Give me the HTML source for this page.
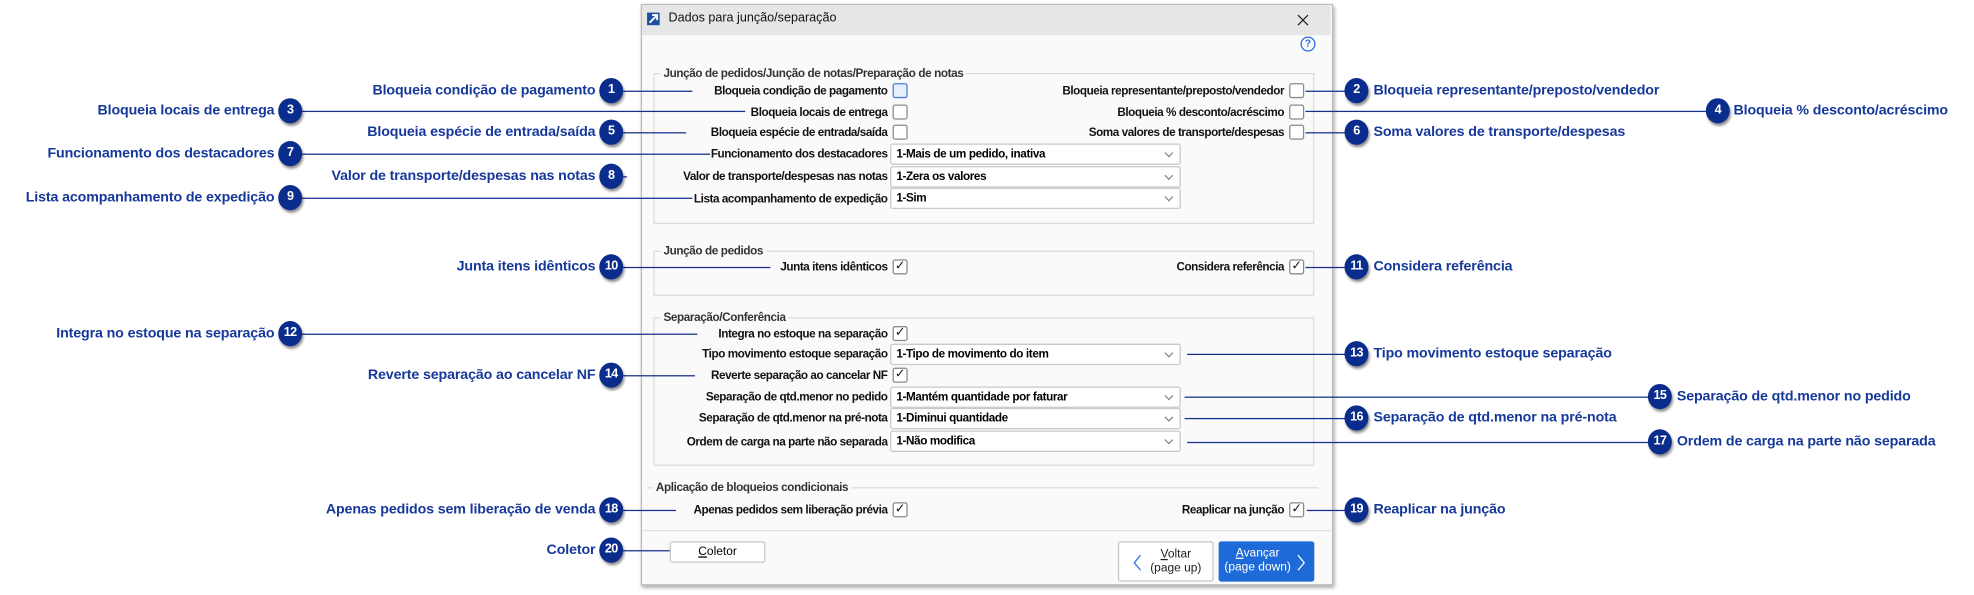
<!DOCTYPE html>
<html><head><meta charset="utf-8"><style>
html,body{margin:0;padding:0;background:#fff;width:1974px;height:595px;overflow:hidden}
#w{position:absolute;left:0;top:0;width:1568px;height:473px;transform:scale(1.2589);transform-origin:0 0;font-family:"Liberation Sans",sans-serif}
.a{position:absolute}
.b{position:absolute;width:19px;height:20px;border-radius:50%;background:#0a2c8c;color:#fff;font:bold 10px "Liberation Sans",sans-serif;line-height:20px;text-align:center;box-shadow:1px 2px 2px rgba(0,0,0,.45);letter-spacing:-.5px;z-index:3}
.cl{position:absolute;color:#16389a;font:bold 11.3px "Liberation Sans",sans-serif;white-space:nowrap;line-height:14px;letter-spacing:-.1px}
.ln{position:absolute;height:1px;background:#14308a;z-index:1}
.lb{position:absolute;font:bold 9.3px "Liberation Sans",sans-serif;color:#111;white-space:nowrap;line-height:12px;letter-spacing:-.35px;text-align:right;background:#fafafa;z-index:2;padding-left:1px}
.cb{position:absolute;width:10px;height:10px;border:1px solid #8a8a8a;border-radius:2px;background:#fff;font:bold 10px "DejaVu Sans",sans-serif;line-height:10px;text-align:center;color:#111}
.co{position:absolute;left:707px;border:1px solid #c9c9c9;border-radius:2px;background:#fff;font:bold 9.3px "Liberation Sans",sans-serif;line-height:15px;padding-left:4px;box-sizing:border-box;width:231px;height:17px;letter-spacing:-.3px}
.co:after{content:"";position:absolute;right:6px;top:4px;width:4px;height:4px;border-right:1px solid #888;border-bottom:1px solid #888;transform:rotate(45deg)}
.gb{position:absolute;border:1px solid #dcdcdc}
.lg{position:absolute;background:#fafafa;padding:0 2px;font:bold 9.3px "Liberation Sans",sans-serif;color:#333;line-height:12px;letter-spacing:-.3px}
</style></head><body><div id="w">
<div class="a" style="left:509px;top:3px;width:548px;height:460px;background:#fafafa;border:1px solid #bdbdbd;box-shadow:1px 2px 3px rgba(0,0,0,.35)"></div>
<div class="a" style="left:510px;top:4px;width:547px;height:24px;background:#e6e6e6"></div>
<div class="a" style="left:514px;top:10px;width:10px;height:10px;background:#1d4fa0"></div>
<svg class="a" style="left:514px;top:10px" width="10" height="10"><path d="M2 8 L8 2 M4 2 H8 V6" stroke="#fff" stroke-width="1.5" fill="none"/></svg>
<div class="a" style="left:531px;top:9px;font:10px 'Liberation Sans',sans-serif;color:#111">Dados para junção/separação</div>
<svg class="a" style="left:1030px;top:11px" width="10" height="10"><path d="M1 1L9 9M9 1L1 9" stroke="#222" stroke-width="1"/></svg>
<div class="a" style="left:1033px;top:29px;width:10px;height:10px;border:1px solid #2a6de0;border-radius:50%;color:#2a6de0;font:bold 8px 'Liberation Sans',sans-serif;text-align:center;line-height:10px">?</div>

<div class="gb" style="left:519px;top:58px;width:523px;height:118px"></div>
<div class="lg" style="left:525px;top:52px">Junção de pedidos/Junção de notas/Preparação de notas</div>
<div class="gb" style="left:519px;top:199px;width:523px;height:34px"></div>
<div class="lg" style="left:525px;top:193px">Junção de pedidos</div>
<div class="gb" style="left:519px;top:252px;width:523px;height:116px"></div>
<div class="lg" style="left:525px;top:246px">Separação/Conferência</div>
<div class="a" style="left:514px;top:387px;width:533px;height:1px;background:#dcdcdc"></div>
<div class="lg" style="left:519px;top:381px">Aplicação de bloqueios condicionais</div>
<div class="a" style="left:510px;top:421px;width:547px;height:1px;background:#e2e2e2"></div>

<div class="lb" style="right:863px;top:66px">Bloqueia condição de pagamento</div>
<div class="lb" style="right:863px;top:83px">Bloqueia locais de entrega</div>
<div class="lb" style="right:863px;top:99px">Bloqueia espécie de entrada/saída</div>
<div class="lb" style="right:863px;top:116px">Funcionamento dos destacadores</div>
<div class="lb" style="right:863px;top:134px">Valor de transporte/despesas nas notas</div>
<div class="lb" style="right:863px;top:152px">Lista acompanhamento de expedição</div>
<div class="lb" style="right:863px;top:206px">Junta itens idênticos</div>
<div class="lb" style="right:863px;top:259px">Integra no estoque na separação</div>
<div class="lb" style="right:863px;top:275px">Tipo movimento estoque separação</div>
<div class="lb" style="right:863px;top:292px">Reverte separação ao cancelar NF</div>
<div class="lb" style="right:863px;top:309px">Separação de qtd.menor no pedido</div>
<div class="lb" style="right:863px;top:326px">Separação de qtd.menor na pré-nota</div>
<div class="lb" style="right:863px;top:345px">Ordem de carga na parte não separada</div>
<div class="lb" style="right:863px;top:399px">Apenas pedidos sem liberação prévia</div>
<div class="lb" style="right:548px;top:66px">Bloqueia representante/preposto/vendedor</div>
<div class="lb" style="right:548px;top:83px">Bloqueia % desconto/acréscimo</div>
<div class="lb" style="right:548px;top:99px">Soma valores de transporte/despesas</div>
<div class="lb" style="right:548px;top:206px">Considera referência</div>
<div class="lb" style="right:548px;top:399px">Reaplicar na junção</div>
<div class="cb" style="left:709px;top:66px;border-color:#4d7fd6;background:#e8effc"></div>
<div class="cb" style="left:709px;top:83px"></div>
<div class="cb" style="left:709px;top:99px"></div>
<div class="cb" style="left:709px;top:206px">✓</div>
<div class="cb" style="left:709px;top:259px">✓</div>
<div class="cb" style="left:709px;top:292px">✓</div>
<div class="cb" style="left:709px;top:399px">✓</div>
<div class="cb" style="left:1024px;top:66px"></div>
<div class="cb" style="left:1024px;top:83px"></div>
<div class="cb" style="left:1024px;top:99px"></div>
<div class="cb" style="left:1024px;top:206px">✓</div>
<div class="cb" style="left:1024px;top:399px">✓</div>
<div class="co" style="top:114px">1-Mais de um pedido, inativa</div>
<div class="co" style="top:132px">1-Zera os valores</div>
<div class="co" style="top:149px">1-Sim</div>
<div class="co" style="top:273px">1-Tipo de movimento do item</div>
<div class="co" style="top:307px">1-Mantém quantidade por faturar</div>
<div class="co" style="top:324px">1-Diminui quantidade</div>
<div class="co" style="top:342px">1-Não modifica</div>
<div class="a" style="left:532px;top:430px;width:74px;height:15px;border:1px solid #c8c8c8;border-radius:2px;background:#fff;font:9.5px 'Liberation Sans',sans-serif;text-align:center;line-height:15px"><u>C</u>oletor</div>
<div class="a" style="left:888px;top:430px;width:76px;height:32px;border:1px solid #c8c8c8;border-radius:2px;background:#fff;font:9.5px 'Liberation Sans',sans-serif;line-height:11px;text-align:center;box-sizing:border-box;padding:4px 0 0 16px;color:#222"><u>V</u>oltar<br>(page up)</div>
<svg class="a" style="left:900px;top:440px" width="8" height="14"><path d="M6 1L1 7L6 13" stroke="#2a6de0" fill="none" stroke-width="1"/></svg>
<div class="a" style="left:968px;top:430px;width:76px;height:32px;background:#1d6ad8;border-radius:2px;font:9.5px 'Liberation Sans',sans-serif;line-height:11px;color:#fff;box-sizing:border-box;padding:4px 14px 0 0;text-align:center"><u>A</u>vançar<br>(page down)</div>
<svg class="a" style="left:1030px;top:440px" width="8" height="14"><path d="M1 1L6 7L1 13" stroke="#fff" fill="none" stroke-width="1"/></svg>

<div class="ln" style="left:495px;width:55px;top:72px"></div><div class="b" style="left:476px;top:62px">1</div><div class="cl" style="right:1095px;top:65px">Bloqueia condição de pagamento</div>
<div class="ln" style="left:240px;width:352px;top:88px"></div><div class="b" style="left:221px;top:78px">3</div><div class="cl" style="right:1350px;top:81px">Bloqueia locais de entrega</div>
<div class="ln" style="left:495px;width:50px;top:105px"></div><div class="b" style="left:476px;top:95px">5</div><div class="cl" style="right:1095px;top:98px">Bloqueia espécie de entrada/saída</div>
<div class="ln" style="left:240px;width:340px;top:122px"></div><div class="b" style="left:221px;top:112px">7</div><div class="cl" style="right:1350px;top:115px">Funcionamento dos destacadores</div>
<div class="ln" style="left:495px;width:3px;top:140px"></div><div class="b" style="left:476px;top:130px">8</div><div class="cl" style="right:1095px;top:133px">Valor de transporte/despesas nas notas</div>
<div class="ln" style="left:240px;width:328px;top:157px"></div><div class="b" style="left:221px;top:147px">9</div><div class="cl" style="right:1350px;top:150px">Lista acompanhamento de expedição</div>
<div class="ln" style="left:495px;width:117px;top:212px"></div><div class="b" style="left:476px;top:202px">10</div><div class="cl" style="right:1095px;top:205px">Junta itens idênticos</div>
<div class="ln" style="left:240px;width:314px;top:265px"></div><div class="b" style="left:221px;top:255px">12</div><div class="cl" style="right:1350px;top:258px">Integra no estoque na separação</div>
<div class="ln" style="left:495px;width:57px;top:298px"></div><div class="b" style="left:476px;top:288px">14</div><div class="cl" style="right:1095px;top:291px">Reverte separação ao cancelar NF</div>
<div class="ln" style="left:495px;width:42px;top:405px"></div><div class="b" style="left:476px;top:395px">18</div><div class="cl" style="right:1095px;top:398px">Apenas pedidos sem liberação de venda</div>
<div class="ln" style="left:495px;width:37px;top:437px"></div><div class="b" style="left:476px;top:427px">20</div><div class="cl" style="right:1095px;top:430px">Coletor</div>
<div class="ln" style="left:1037px;width:32px;top:72px"></div><div class="b" style="left:1068px;top:62px">2</div><div class="cl" style="left:1091px;top:65px">Bloqueia representante/preposto/vendedor</div>
<div class="ln" style="left:1037px;width:318px;top:88px"></div><div class="b" style="left:1355px;top:78px">4</div><div class="cl" style="left:1377px;top:81px">Bloqueia % desconto/acréscimo</div>
<div class="ln" style="left:1037px;width:32px;top:105px"></div><div class="b" style="left:1068px;top:95px">6</div><div class="cl" style="left:1091px;top:98px">Soma valores de transporte/despesas</div>
<div class="ln" style="left:1037px;width:32px;top:212px"></div><div class="b" style="left:1068px;top:202px">11</div><div class="cl" style="left:1091px;top:205px">Considera referência</div>
<div class="ln" style="left:943px;width:126px;top:281px"></div><div class="b" style="left:1068px;top:271px">13</div><div class="cl" style="left:1091px;top:274px">Tipo movimento estoque separação</div>
<div class="ln" style="left:941px;width:369px;top:315px"></div><div class="b" style="left:1309px;top:305px">15</div><div class="cl" style="left:1332px;top:308px">Separação de qtd.menor no pedido</div>
<div class="ln" style="left:941px;width:128px;top:332px"></div><div class="b" style="left:1068px;top:322px">16</div><div class="cl" style="left:1091px;top:325px">Separação de qtd.menor na pré-nota</div>
<div class="ln" style="left:943px;width:367px;top:351px"></div><div class="b" style="left:1309px;top:341px">17</div><div class="cl" style="left:1332px;top:344px">Ordem de carga na parte não separada</div>
<div class="ln" style="left:1038px;width:31px;top:405px"></div><div class="b" style="left:1068px;top:395px">19</div><div class="cl" style="left:1091px;top:398px">Reaplicar na junção</div>
</div></body></html>
